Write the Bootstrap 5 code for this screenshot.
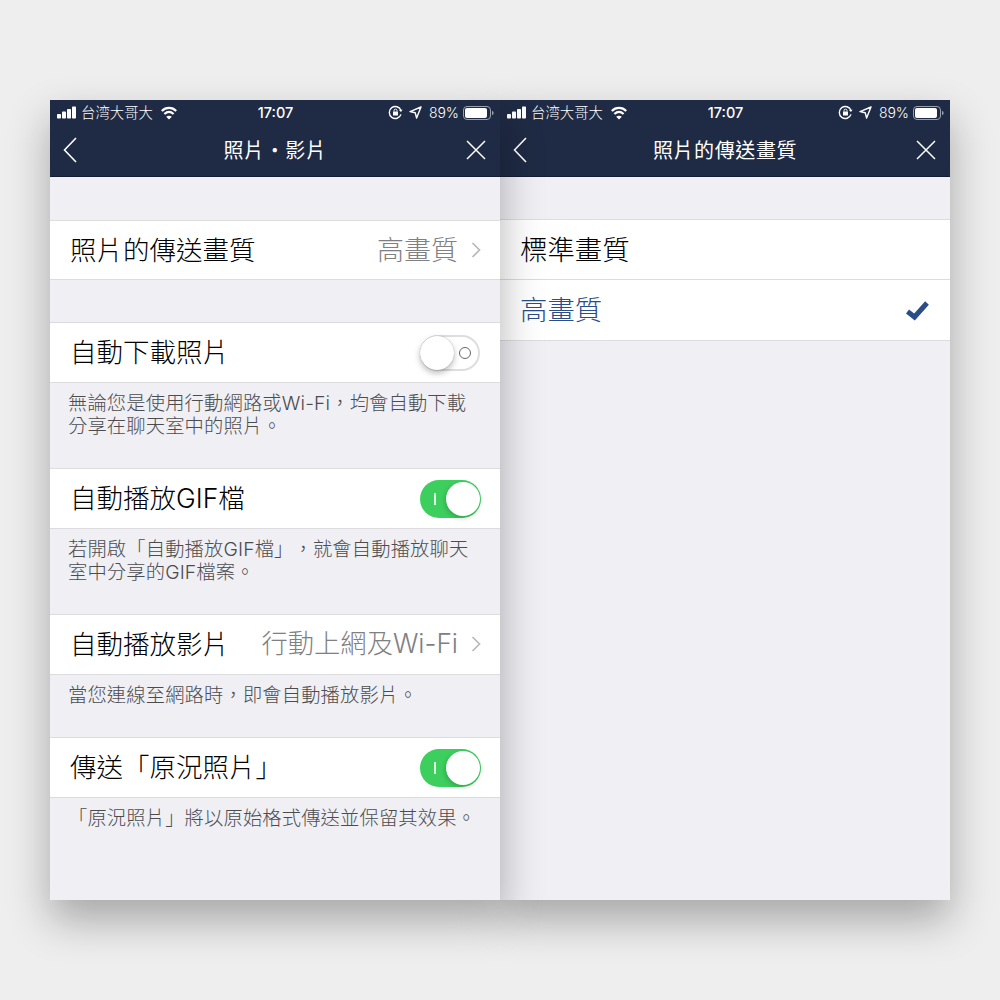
<!DOCTYPE html>
<html lang="zh-Hant">
<head>
<meta charset="utf-8">
<title>照片・影片</title>
<link rel="stylesheet" href="https://cdn.jsdelivr.net/npm/bootstrap@5.3.0/dist/css/bootstrap.min.css">
<style>
html,body{height:100%}
body{background:#eee;font-family:"Inter","Noto Sans CJK TC",sans-serif;padding:100px 50px;color:#111;text-spacing-trim:space-all}
.stage{width:900px;height:800px}
.phone{width:450px;height:800px;background:#efeff4;position:relative;box-shadow:0 20px 40px rgba(0,0,0,.3)}
.phone-a{z-index:2}
.topbar{height:77px;background:#1f2a44;border-bottom:1px solid #151d33;color:#fff}
.status{height:25px;padding:0 6px 0 7px;font-size:14.4px;font-weight:300;position:relative}
.status .clock{position:absolute;left:1px;right:0;top:0;line-height:25px;text-align:center;font-weight:500;font-size:14.5px}
.status .pct{font-size:14px;margin-left:7px;margin-right:4px}
.gap-loc{margin-left:6px}
.titlebar{height:50px;padding:0 14px 0 13px}
.back{margin-right:7px}
.title{font-size:20px;letter-spacing:.6px;font-weight:400;flex:1;text-align:center;line-height:1;padding-top:2px}
.gap-a{height:43px}
.gap-b{height:42px}
.gap-c{height:42px}
.rowline{height:61px;background:#fff;border-top:1px solid #dcdce0;border-bottom:1px solid #dcdce0;padding:0 20px;font-size:26.5px;font-weight:300;line-height:1;color:#000}
.rowline+.rowline{border-top:0}
.row-first{height:60px}
.pick{font-size:27.4px;padding-top:2px}
.val{color:#808084;font-size:27px;font-weight:300}
.val-long{font-size:26.3px}
.chev{margin-left:13px;margin-right:-1px}
.note{padding:9px 18px 0;font-size:19.3px;line-height:23px;color:#4c4c4f;font-weight:300;letter-spacing:.15px}
.note-2{height:85px}
.note-1{height:62px}
.sw{width:61px;height:38px;border-radius:19px;position:relative;flex:none;margin-right:-1px}
.sw-off{background:#fff;border:2px solid #dedee0;height:36px;width:60px;margin-right:0}
.sw-on{background:#3ccf5e}
.knob{position:absolute;width:34px;height:34px;border-radius:50%;background:#fff;top:2px}
.sw-off .knob{left:-2px;top:-1px;box-shadow:0 3px 6px rgba(0,0,0,.28),0 0 1px rgba(0,0,0,.3)}
.sw-on .knob{right:1px;box-shadow:-1px 2px 5px rgba(0,0,0,.2)}
.sw-ring{position:absolute;right:7px;top:10px;width:12px;height:12px;border:1px solid #666;border-radius:50%}
.sw-bar{position:absolute;left:14px;top:13px;width:1.5px;height:12px;background:#dff6e4}
.sel{color:#2a4d8a}
</style>
</head>
<body>
<div class="stage d-flex">
  <section class="phone phone-a">
    <div class="topbar">
      <div class="status d-flex align-items-center">
        <svg width="20" height="13" viewBox="0 0 20 13" fill="#fff"><rect x="0" y="8" width="4" height="4.5" rx=".8"/><rect x="5" y="5.5" width="4" height="7" rx=".8"/><rect x="10" y="3" width="4" height="9.5" rx=".8"/><rect x="15" y="0.5" width="4" height="12" rx=".8"/></svg>
        <span class="ms-1">台湾大哥大</span>
        <svg class="ms-2" width="16" height="14" viewBox="0 0 16 14" fill="none" stroke="#fff" stroke-width="2.2"><path d="M.8 5C4.8.8 11.2.8 15.2 5"/><path d="M3.4 8c2.8-2.6 6.4-2.6 9.2 0"/><path d="M8 13.6 5.2 10.8c1.6-1.4 4-1.4 5.6 0z" fill="#fff" stroke="none"/></svg>
        <span class="clock">17:07</span>
        <span class="ms-auto d-flex align-items-center">
          <svg width="15" height="15" viewBox="0 0 15 15" fill="none" stroke="#fff" stroke-width="1.4"><path d="M13 9.4A6 6 0 1 1 13 5.6"/><path d="M14.6 4.6 13 7 11 5.2z" fill="#fff" stroke="none"/><rect x="5" y="6.6" width="5" height="4" rx=".6" fill="#fff" stroke="none"/><path d="M6 6.6V5.6a1.5 1.5 0 0 1 3 0v1" stroke-width="1"/></svg>
          <svg class="gap-loc" width="13" height="13" viewBox="0 0 13 13" fill="none" stroke="#fff" stroke-width="1.4" stroke-linejoin="round"><path d="M12 1 1 5.6l5.2 1.2L7.6 12z"/></svg>
          <span class="pct">89%</span>
          <svg width="31" height="14" viewBox="0 0 31 14"><rect x=".5" y=".5" width="27" height="13" rx="3.5" fill="none" stroke="#9aa0ad"/><rect x="2" y="2" width="22" height="10" rx="2" fill="#fff"/><path d="M29 5v4c1 0 1.6-.8 1.6-2S30 5 29 5z" fill="#9aa0ad"/></svg>
        </span>
      </div>
      <div class="titlebar d-flex align-items-center">
        <svg class="back" width="14" height="26" viewBox="0 0 14 26" fill="none" stroke="#fff" stroke-width="1.6"><path d="M13 1 1.5 13 13 25"/></svg>
        <div class="title">照片・影片</div>
        <svg width="20" height="20" viewBox="0 0 20 20" fill="none" stroke="#fff" stroke-width="1.5"><path d="M1 1 19 19M19 1 1 19"/></svg>
      </div>
    </div>
    <div class="gap-a"></div>
    <div class="rowline row-first d-flex align-items-center justify-content-between">
      <span>照片的傳送畫質</span>
      <span class="d-flex align-items-center"><span class="val">高畫質</span><svg class="chev" width="10" height="16" viewBox="0 0 10 16" fill="none" stroke="#b9b9bd" stroke-width="1.7"><path d="M1.5 1 8.5 8 1.5 15"/></svg></span>
    </div>
    <div class="gap-b"></div>
    <div class="rowline d-flex align-items-center justify-content-between">
      <span>自動下載照片</span>
      <span class="sw sw-off"><span class="sw-ring"></span><span class="knob"></span></span>
    </div>
    <div class="note note-2">無論您是使用行動網路或Wi-Fi，均會自動下載<br>分享在聊天室中的照片。</div>
    <div class="rowline d-flex align-items-center justify-content-between">
      <span>自動播放GIF檔</span>
      <span class="sw sw-on"><span class="sw-bar"></span><span class="knob"></span></span>
    </div>
    <div class="note note-2">若開啟「自動播放GIF檔」，就會自動播放聊天<br>室中分享的GIF檔案。</div>
    <div class="rowline d-flex align-items-center justify-content-between">
      <span>自動播放影片</span>
      <span class="d-flex align-items-center"><span class="val val-long">行動上網及Wi-Fi</span><svg class="chev" width="10" height="16" viewBox="0 0 10 16" fill="none" stroke="#b9b9bd" stroke-width="1.7"><path d="M1.5 1 8.5 8 1.5 15"/></svg></span>
    </div>
    <div class="note note-1">當您連線至網路時，即會自動播放影片。</div>
    <div class="rowline d-flex align-items-center justify-content-between">
      <span>傳送「原況照片」</span>
      <span class="sw sw-on"><span class="sw-bar"></span><span class="knob"></span></span>
    </div>
    <div class="note">「原況照片」將以原始格式傳送並保留其效果。</div>
  </section>
  <section class="phone">
    <div class="topbar">
      <div class="status d-flex align-items-center">
        <svg width="20" height="13" viewBox="0 0 20 13" fill="#fff"><rect x="0" y="8" width="4" height="4.5" rx=".8"/><rect x="5" y="5.5" width="4" height="7" rx=".8"/><rect x="10" y="3" width="4" height="9.5" rx=".8"/><rect x="15" y="0.5" width="4" height="12" rx=".8"/></svg>
        <span class="ms-1">台湾大哥大</span>
        <svg class="ms-2" width="16" height="14" viewBox="0 0 16 14" fill="none" stroke="#fff" stroke-width="2.2"><path d="M.8 5C4.8.8 11.2.8 15.2 5"/><path d="M3.4 8c2.8-2.6 6.4-2.6 9.2 0"/><path d="M8 13.6 5.2 10.8c1.6-1.4 4-1.4 5.6 0z" fill="#fff" stroke="none"/></svg>
        <span class="clock">17:07</span>
        <span class="ms-auto d-flex align-items-center">
          <svg width="15" height="15" viewBox="0 0 15 15" fill="none" stroke="#fff" stroke-width="1.4"><path d="M13 9.4A6 6 0 1 1 13 5.6"/><path d="M14.6 4.6 13 7 11 5.2z" fill="#fff" stroke="none"/><rect x="5" y="6.6" width="5" height="4" rx=".6" fill="#fff" stroke="none"/><path d="M6 6.6V5.6a1.5 1.5 0 0 1 3 0v1" stroke-width="1"/></svg>
          <svg class="gap-loc" width="13" height="13" viewBox="0 0 13 13" fill="none" stroke="#fff" stroke-width="1.4" stroke-linejoin="round"><path d="M12 1 1 5.6l5.2 1.2L7.6 12z"/></svg>
          <span class="pct">89%</span>
          <svg width="31" height="14" viewBox="0 0 31 14"><rect x=".5" y=".5" width="27" height="13" rx="3.5" fill="none" stroke="#9aa0ad"/><rect x="2" y="2" width="22" height="10" rx="2" fill="#fff"/><path d="M29 5v4c1 0 1.6-.8 1.6-2S30 5 29 5z" fill="#9aa0ad"/></svg>
        </span>
      </div>
      <div class="titlebar d-flex align-items-center">
        <svg class="back" width="14" height="26" viewBox="0 0 14 26" fill="none" stroke="#fff" stroke-width="1.6"><path d="M13 1 1.5 13 13 25"/></svg>
        <div class="title">照片的傳送畫質</div>
        <svg width="20" height="20" viewBox="0 0 20 20" fill="none" stroke="#fff" stroke-width="1.5"><path d="M1 1 19 19M19 1 1 19"/></svg>
      </div>
    </div>
    <div class="gap-c"></div>
    <div class="rowline pick d-flex align-items-center"><span>標準畫質</span></div>
    <div class="rowline pick d-flex align-items-center justify-content-between sel">
      <span>高畫質</span>
      <svg width="24" height="20" viewBox="0 0 24 20" fill="none" stroke="#2a4d8a" stroke-width="5"><path d="M1.5 10.5 8.5 16 21 2"/></svg>
    </div>
  </section>
</div>
<script src="https://cdn.jsdelivr.net/npm/bootstrap@5.3.0/dist/js/bootstrap.bundle.min.js"></script>
</body>
</html>
